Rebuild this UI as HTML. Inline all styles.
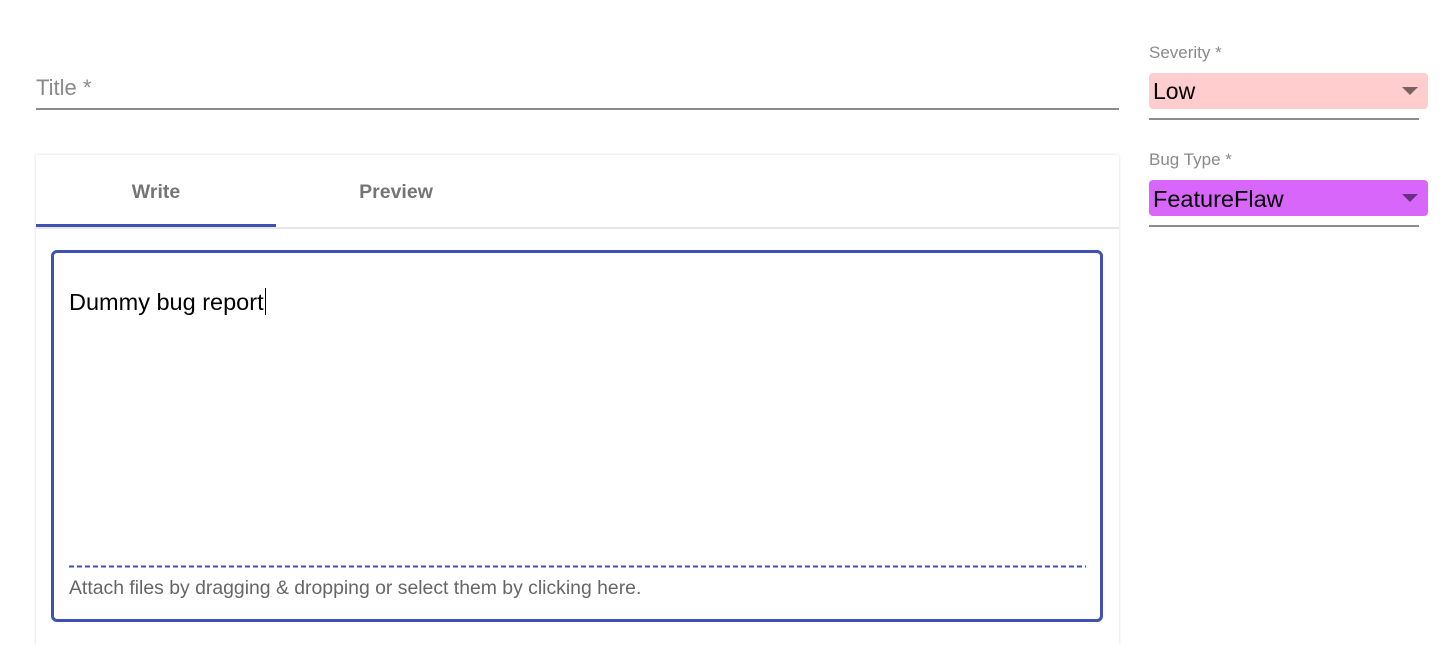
<!DOCTYPE html>
<html><head><meta charset="utf-8"><style>
body{margin:0;width:1453px;height:636px;background:#fff;font-family:"Liberation Sans",sans-serif;position:relative;overflow:hidden}
.a{position:absolute;white-space:nowrap}
</style></head><body>
<div class="a" style="left:36px;top:75px;font-size:22px;color:#8a8a8a">Title *</div>
<div class="a" style="left:36px;top:108px;width:1083px;height:2px;background:#8c8c8c"></div>

<div class="a" style="left:1149px;top:43px;font-size:17px;color:#8a8a8a">Severity *</div>
<div class="a" style="left:1149px;top:73px;width:279px;height:36px;background:#ffcdcd;border-radius:4px"></div>
<div class="a" style="left:1153px;top:78px;font-size:23px;color:#000">Low</div>
<div class="a" style="left:1402px;top:87px;width:0;height:0;border-left:8px solid transparent;border-right:8px solid transparent;border-top:8px solid #7a6060"></div>
<div class="a" style="left:1149px;top:118px;width:270px;height:2px;background:#8c8c8c"></div>

<div class="a" style="left:1149px;top:150px;font-size:17px;color:#8a8a8a">Bug Type *</div>
<div class="a" style="left:1149px;top:180px;width:279px;height:36px;background:#d966fb;border-radius:4px"></div>
<div class="a" style="left:1153px;top:186px;font-size:23.5px;color:#000">FeatureFlaw</div>
<div class="a" style="left:1402px;top:194px;width:0;height:0;border-left:8px solid transparent;border-right:8px solid transparent;border-top:8px solid #6a3080"></div>
<div class="a" style="left:1149px;top:225px;width:270px;height:2px;background:#8c8c8c"></div>

<div class="a" style="left:36px;top:155px;width:1083px;height:490px;box-shadow:0 0 3px rgba(0,0,0,0.15);background:#fff"></div>
<div class="a" style="left:36px;top:181px;width:240px;text-align:center;font-size:19.5px;font-weight:bold;color:#757575">Write</div>
<div class="a" style="left:276px;top:181px;width:240px;text-align:center;font-size:19.5px;font-weight:bold;color:#757575">Preview</div>
<div class="a" style="left:36px;top:227px;width:1083px;height:2px;background:#e6e6e6"></div>
<div class="a" style="left:36px;top:224px;width:240px;height:3px;background:#3f51b5"></div>

<div class="a" style="left:51px;top:250px;width:1046px;height:366px;border:3px solid #3f51b5;border-radius:6px"></div>
<div class="a" style="left:69px;top:288px;font-size:23.5px;color:#000">Dummy bug report<span style="display:inline-block;width:1px;height:27px;background:#000;vertical-align:-5px;margin-left:1px"></span></div>
<svg class="a" style="left:69px;top:565px" width="1017" height="3"><line x1="0" y1="1.5" x2="1017" y2="1.5" stroke="#3f51b5" stroke-width="2" stroke-dasharray="5,3"/></svg>
<div class="a" style="left:69px;top:577px;font-size:19.4px;color:#666">Attach files by dragging &amp; dropping or select them by clicking here.</div>
</body></html>
